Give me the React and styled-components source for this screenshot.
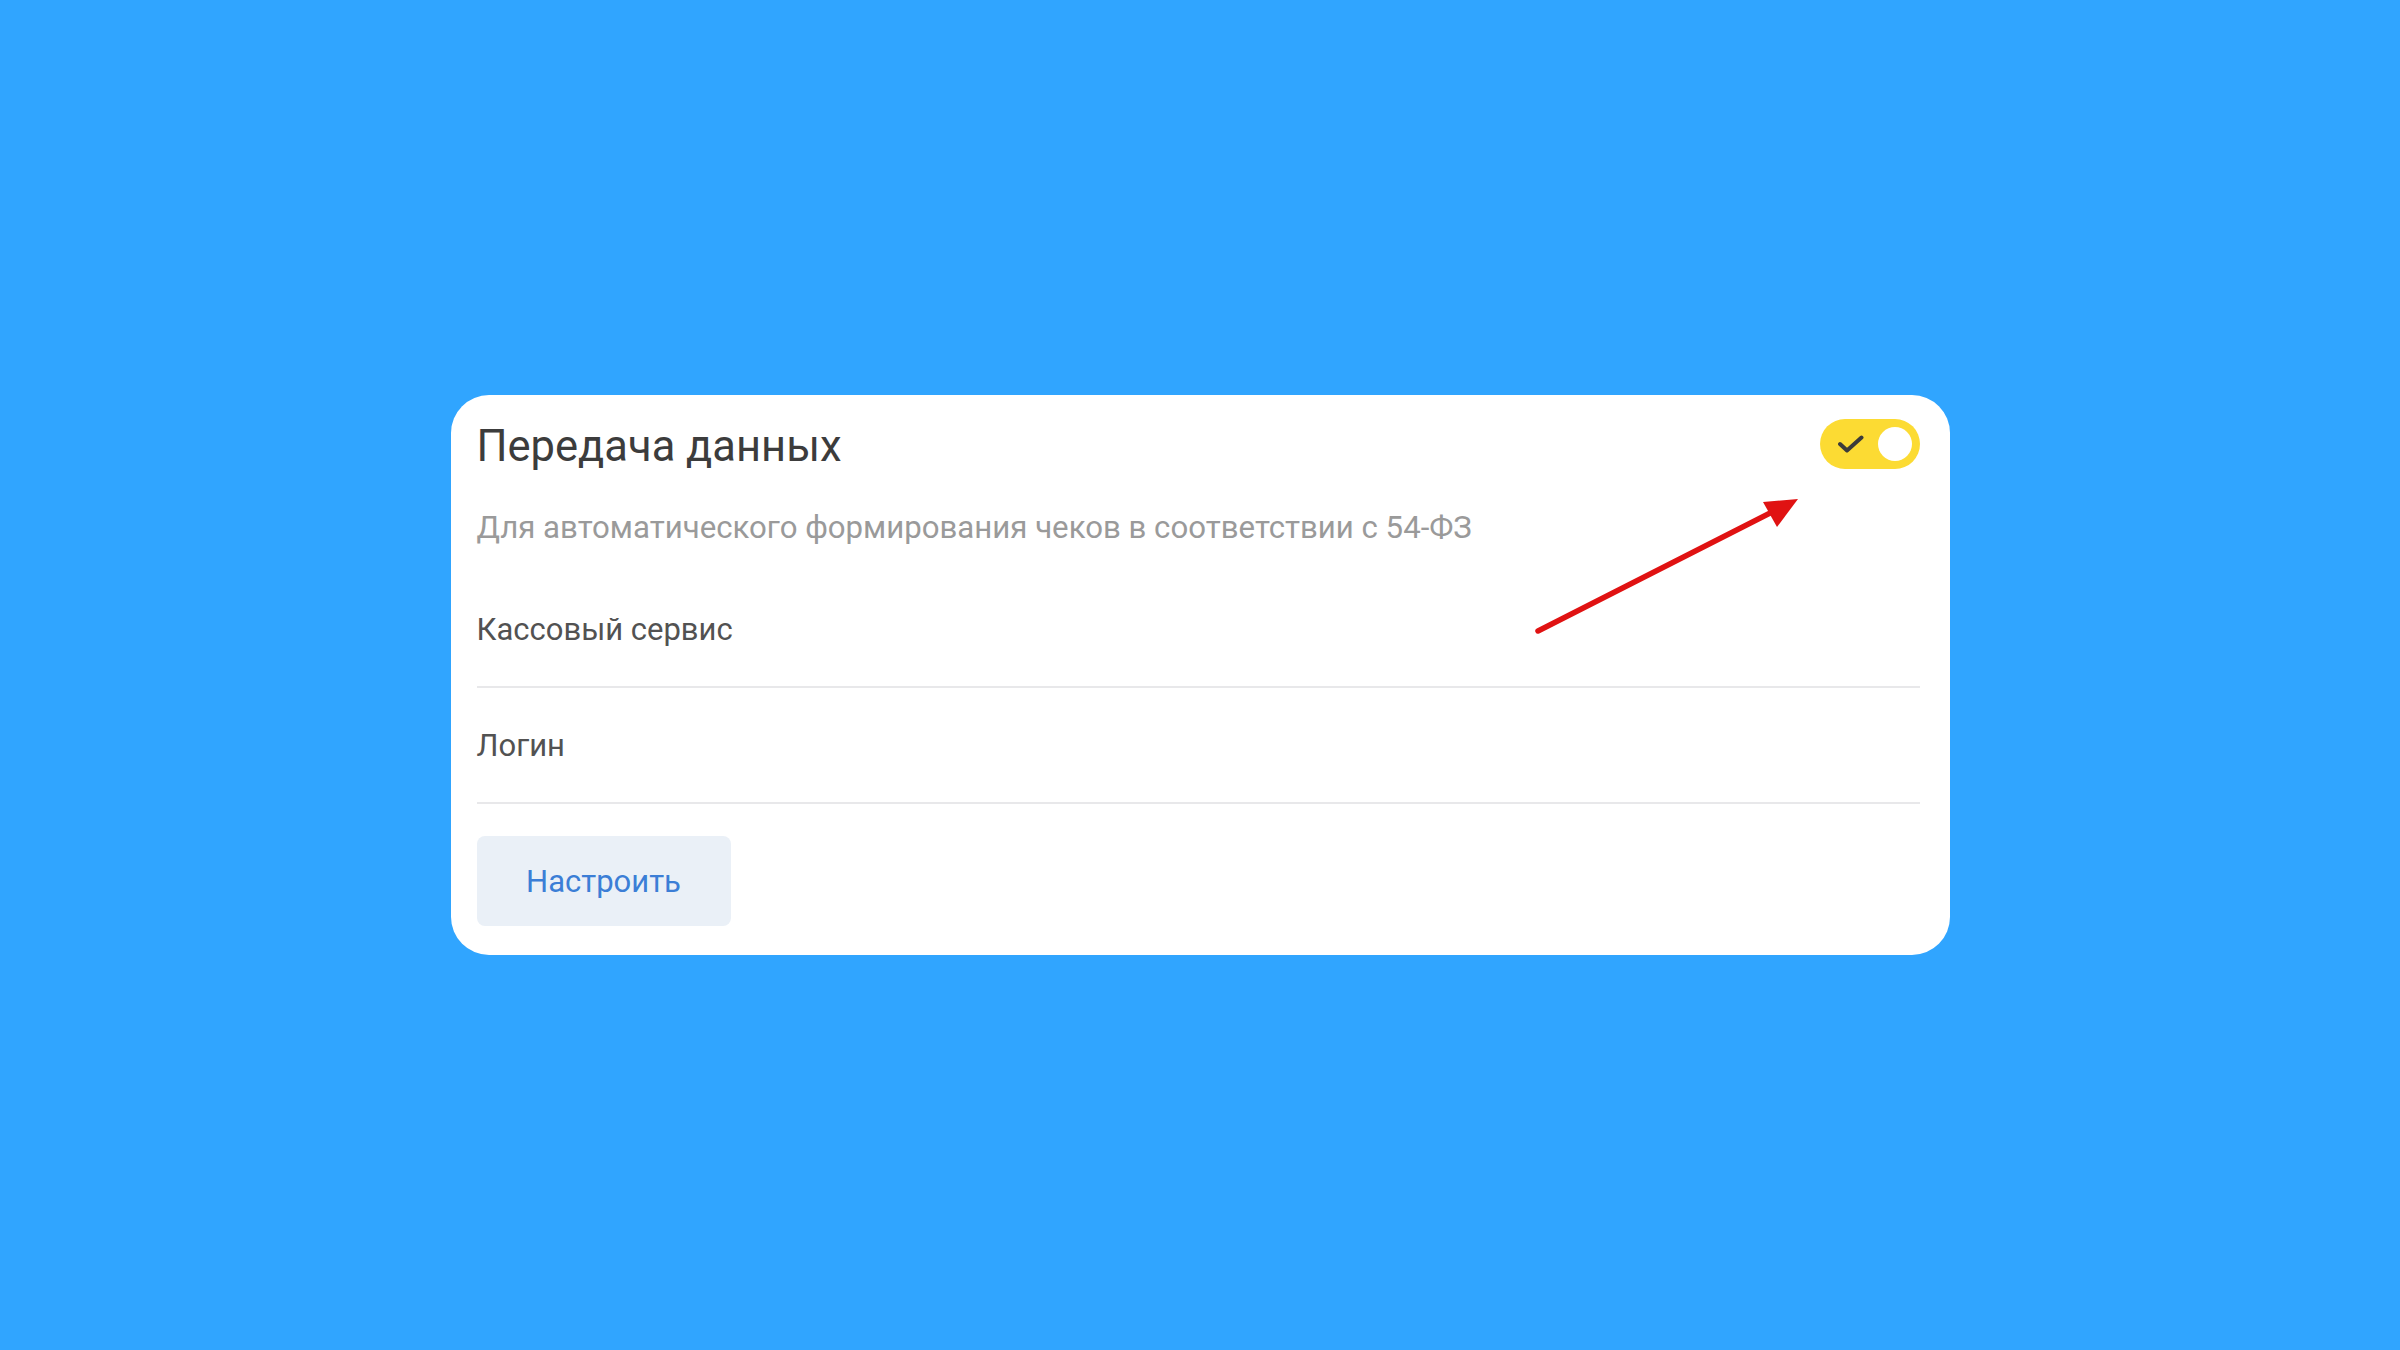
import React from "react";
import styled, { createGlobalStyle } from "styled-components";

const Global = createGlobalStyle`
  html, body {
    margin: 0;
    padding: 0;
    background: #30a5ff;
  }
  body {
    font-family: Roboto, "Noto Sans", "Liberation Sans", sans-serif;
  }
`;

const Page = styled.div`
  width: 2400px;
  height: 1350px;
  display: flex;
  align-items: flex-start;
  justify-content: center;
  padding-top: 395px;
  box-sizing: border-box;
`;

const Card = styled.section`
  position: relative;
  width: 1499px;
  box-sizing: border-box;
  background: #ffffff;
  border-radius: 38px;
  padding: 24px 30px 29px 26px;
  display: flex;
  flex-direction: column;
`;

const Header = styled.div`
  display: flex;
  align-items: center;
  justify-content: space-between;
  height: 50px;
`;

const Title = styled.h2`
  margin: 6px 0 0;
  font-size: 43.5px;
  line-height: 1;
  font-weight: 400;
  color: #3c3c3c;
`;

const Toggle = styled.div`
  width: 100px;
  height: 50px;
  border-radius: 25px;
  background: #fcdb33;
  display: flex;
  align-items: center;
  justify-content: space-between;
  padding: 0 8px 0 18px;
  box-sizing: border-box;
`;

const Knob = styled.span`
  width: 34px;
  height: 34px;
  border-radius: 50%;
  background: #ffffff;
`;

const Description = styled.p`
  margin: 41px 0 0;
  font-size: 31.2px;
  line-height: 36px;
  color: #9a9a9a;
`;

const FieldList = styled.div`
  margin-top: 26px;
  display: flex;
  flex-direction: column;
`;

const Field = styled.div`
  padding: 40px 0 38px;
  border-bottom: 2px solid #e8e8ea;
  font-size: 31px;
  line-height: 36px;
  color: #525252;
`;

const Actions = styled.div`
  margin-top: 32px;
  display: flex;
`;

const Button = styled.button`
  width: 254px;
  height: 90px;
  border: none;
  border-radius: 8px;
  background: #eaf0f7;
  color: #3b7ed6;
  font-family: inherit;
  font-size: 31px;
  cursor: pointer;
`;

const Pointer = styled.svg`
  position: absolute;
  left: 1080px;
  top: 96px;
  overflow: visible;
  pointer-events: none;
`;

function CheckIcon() {
  return (
    <svg width="26" height="18" viewBox="0 0 26 18">
      <path
        d="M2 9 L9 15.5 L23.5 2.5"
        fill="none"
        stroke="#3b3b3b"
        strokeWidth="4"
        strokeLinecap="round"
        strokeLinejoin="round"
      />
    </svg>
  );
}

export default function App() {
  return (
    <>
      <Global />
      <Page>
        <Card>
          <Header>
            <Title>Передача данных</Title>
            <Toggle>
              <CheckIcon />
              <Knob />
            </Toggle>
          </Header>
          <Description>
            Для автоматического формирования чеков в соответствии с 54-ФЗ
          </Description>
          <FieldList>
            <Field>Кассовый сервис</Field>
            <Field>Логин</Field>
          </FieldList>
          <Actions>
            <Button>Настроить</Button>
          </Actions>
          <Pointer width="280" height="150" viewBox="0 0 280 150">
            <line
              x1="7"
              y1="140"
              x2="245"
              y2="19"
              stroke="#e01212"
              strokeWidth="5.5"
              strokeLinecap="round"
            />
            <polygon points="267,8 232,11 246,36" fill="#e01212" />
          </Pointer>
        </Card>
      </Page>
    </>
  );
}
